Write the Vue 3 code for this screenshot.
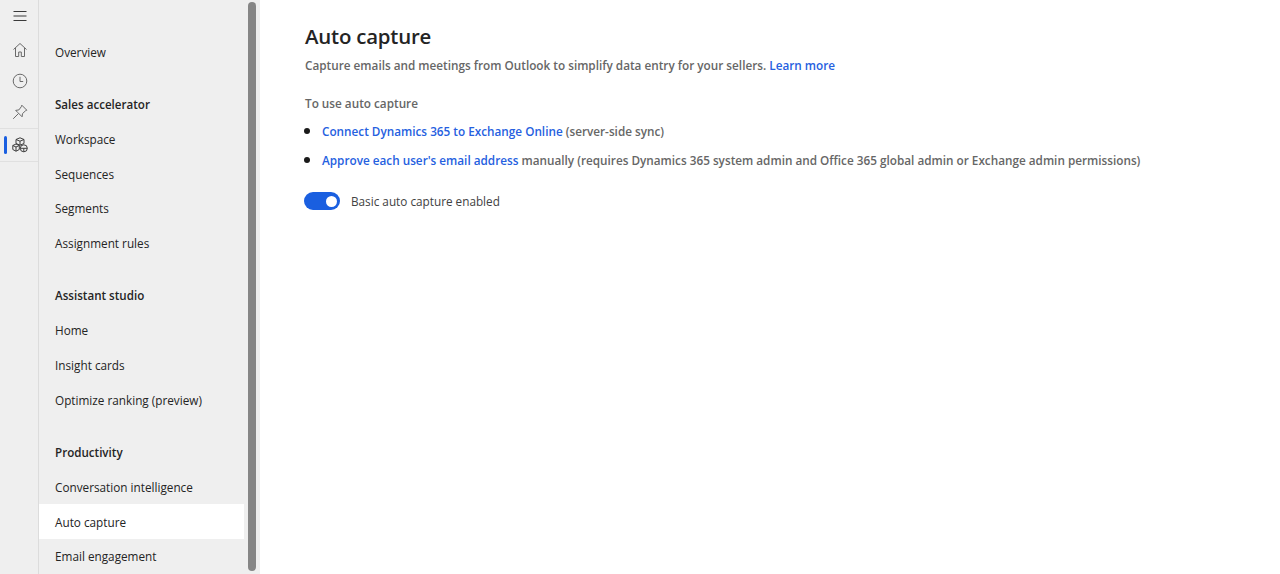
<script setup>
const groups = [
  { items: ['Overview'] },
  { title: 'Sales accelerator', items: ['Workspace', 'Sequences', 'Segments', 'Assignment rules'] },
  { title: 'Assistant studio', items: ['Home', 'Insight cards', 'Optimize ranking (preview)'] },
  { title: 'Productivity', items: ['Conversation intelligence', 'Auto capture', 'Email engagement'] },
]
</script>

<template>
  <div class="page">
    <aside class="rail">
      <button class="rail-btn menu" aria-label="Menu">
        <svg width="16" height="12" viewBox="0 0 16 12" fill="none" stroke="#3a3a3a" stroke-width="1.100"><path d="M1.500 1.500h13M1.500 6h13M1.500 10.500h13"/></svg>
      </button>
      <div class="rail-group">
        <button class="rail-btn" aria-label="Home">
          <svg width="16" height="16" viewBox="0 0 16 16" fill="none" stroke="#6a6a6a" stroke-width="1"><path d="M1.500 7.500 8 1.500l6.500 6M3.500 6v8.500h3.200v-4.500h2.600v4.500h3.200V6"/></svg>
        </button>
        <button class="rail-btn" aria-label="Recent">
          <svg width="16" height="16" viewBox="0 0 16 16" fill="none" stroke="#6a6a6a" stroke-width="1"><circle cx="8" cy="8" r="6.800"/><path d="M8 3.800V8.500h3.200"/></svg>
        </button>
        <button class="rail-btn" aria-label="Pinned">
          <svg width="16" height="16" viewBox="0 0 16 16" fill="none" stroke="#6a6a6a" stroke-width="1"><path d="M9.800 1.200 14.800 6.200l-1.300.6-3 2.800-.4 3.200L5.900 8.600 3.700 6.400l3.200-.5 2.400-3.200zM6.500 9.500 1.200 14.800"/></svg>
        </button>
      </div>
      <div class="rail-active">
        <span class="active-bar"></span>
        <svg width="16" height="16" viewBox="0 0 16 16" fill="none" stroke="#3d3d3d" stroke-width="1"><path d="M8 .8 12 2.500V6.500L8 8.200 4 6.500V2.500zM4 2.500 8 4.200l4-1.700M8 4.200v4"/><path d="M4 7 7.300 8.500v4L4 14.200.8 12.500v-4zM.8 8.500 4 10l3.300-1.500M4 10v4.200"/><circle cx="11.800" cy="11.300" r="3.500" fill="#efefef"/><path d="M8.300 11.300h7M11.800 11.300v3.500"/></svg>
      </div>
    </aside>

    <nav class="sidenav">
      <div class="nav-scroll">
        <section v-for="(g, i) in groups" :key="i" class="nav-group">
          <h3 v-if="g.title" class="nav-title">{{ g.title }}</h3>
          <a v-for="item in g.items" :key="item" class="nav-item" :class="{ selected: item === 'Auto capture' }">{{ item }}</a>
        </section>
      </div>
      <div class="scrollbar"><span class="thumb"></span></div>
    </nav>

    <main class="content">
      <h1>Auto capture</h1>
      <p class="lead">Capture emails and meetings from Outlook to simplify data entry for your sellers. <a>Learn more</a></p>
      <p class="use">To use auto capture</p>
      <ul>
        <li><a>Connect Dynamics 365 to Exchange Online</a> (server-side sync)</li>
        <li><a>Approve each user's email address</a> manually (requires Dynamics 365 system admin and Office 365 global admin or Exchange admin permissions)</li>
      </ul>
      <div class="toggle-row">
        <span class="toggle"><span class="knob"></span></span>
        <span class="toggle-label">Basic auto capture enabled</span>
      </div>
    </main>
  </div>
</template>

<style>
html, body { margin: 0; background: #fff; overflow: hidden; }
</style>

<style scoped>
.page {
  display: flex;
  height: 574px;
  overflow: hidden;
  font-family: "Open Sans", "Noto Sans", sans-serif;
  font-size: 11.750px;
  color: #242424;
}
.rail {
  width: 38px;
  flex: none;
  background: #efefef;
  border-right: 1px solid #dcdcdc;
  display: flex;
  flex-direction: column;
}
.rail-btn {
  display: flex;
  align-items: center;
  justify-content: center;
  width: 38px;
  height: 31px;
  padding: 0 0 0 2px;
  border: 0;
  background: none;
}
.menu { height: 32px; margin-bottom: 2px; }
.rail-group { display: flex; flex-direction: column; height: 94px; }
.rail-active {
  position: relative;
  height: 32px;
  display: flex;
  align-items: center;
  justify-content: center;
  padding-left: 2px;
  border-top: 1px solid #e0e0e0;
  border-bottom: 1px solid #e0e0e0;
}
.active-bar {
  position: absolute;
  left: 4px;
  top: 7px;
  width: 3px;
  height: 18px;
  border-radius: 2px;
  background: #1a5fe0;
}
.sidenav {
  width: 221px;
  flex: none;
  background: #efefef;
  display: flex;
  position: relative;
  overflow: hidden;
}
.nav-scroll {
  width: 205px;
  padding-top: 34px;
  flex: none;
}
.nav-group + .nav-group { margin-top: 17.400px; }
.nav-title,
.nav-item {
  display: flex;
  align-items: center;
  box-sizing: border-box;
  height: 34.800px;
  margin: 0;
  padding: 1px 0 0 16px;
  color: #242424;
}
.nav-title {
  font-size: 11.600px;
  font-weight: 600;
}
.nav-item.selected { background: #fff; }
.scrollbar {
  position: absolute;
  left: 209px;
  top: 2px;
  bottom: 3px;
  width: 8px;
}
.thumb {
  display: block;
  height: 100%;
  border-radius: 4px;
  background: #868686;
}
.content {
  flex: 1;
  padding-left: 45px;
  min-width: 0;
}
h1 {
  margin: 21px 0 0;
  font-size: 20.400px;
  line-height: 31px;
  font-weight: 600;
  letter-spacing: -0.200px;
  color: #242424;
}
.lead {
  margin: 2.500px 0 0;
  line-height: 20px;
  color: #666;
  font-weight: 600;
}
a { color: #2560e0; }
.use {
  margin: 18.500px 0 0;
  line-height: 20px;
  color: #666;
  font-weight: 600;
}
ul {
  margin: 6.500px 0 0;
  padding: 0 0 0 17px;
  list-style: disc;
  color: #666;
  font-weight: 600;
}
li { line-height: 20px; }
li + li { margin-top: 8.500px; }
li::marker { color: #1a1a1a; font-size: 16px; }
.toggle-row {
  display: flex;
  align-items: center;
  gap: 11px;
  margin: 21px 0 0 -1px;
  height: 20px;
}
.toggle {
  position: relative;
  display: block;
  width: 36px;
  height: 18px;
  border-radius: 9px;
  background: #1a5fe0;
}
.knob {
  position: absolute;
  right: 3.500px;
  top: 3.500px;
  width: 11px;
  height: 11px;
  border-radius: 50%;
  background: #fff;
}
.toggle-label { color: #424242; }
</style>
